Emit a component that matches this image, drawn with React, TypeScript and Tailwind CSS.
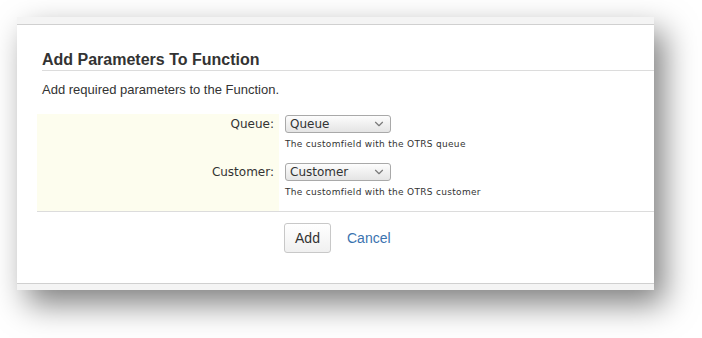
import { ChevronDown } from "lucide-react";

const sans = "font-['Liberation_Sans',Arial,sans-serif]";
const deja = "font-['DejaVu_Sans',sans-serif]";

function FakeSelect({ value }: { value: string }) {
    return (
        <div className={`flex items-center justify-between w-[106px] h-[18px] pl-[4px] pr-[4px] border border-[#a9a9a9] rounded-[3px] bg-gradient-to-b from-[#fdfdfd] to-[#e4e4e4] text-[12px] leading-none text-[#333] ${deja}`}>
            <span>{value}</span>
            <ChevronDown size={14} strokeWidth={2} className="text-[#7a7a7a]" />
        </div>
    );
}

function Row({ label, value, help, h }: { label: string; value: string; help: string; h: string }) {
    return (
        <div className={`flex ${h}`}>
            <div className={`w-[242px] bg-[#fdfdee] flex justify-end pr-[5px] pt-[3px] text-[12px] leading-[15px] text-[#333] ${deja}`}>
                {label}
            </div>
            <div className="pl-[6px] pt-[1px] flex flex-col">
                <FakeSelect value={value} />
                <p className={`mt-[6px] text-[9px] leading-[11px] tracking-[0.3px] text-[#333] ${deja}`}>{help}</p>
            </div>
        </div>
    );
}

export default function App() {
    return (
        <div className="w-[702px] h-[338px] bg-white overflow-hidden pt-[17px] pl-[17px]">
            <div className="w-[637px] bg-white shadow-[10px_14px_30px_rgba(0,0,0,0.5)]">
                <div className="h-[8px] bg-[#f4f4f4] border-b border-[#d0d0d0]" />
                <div className={`ml-[25px] pt-[24px] border-b border-[#dcdcdc] ${sans}`}>
                    <h1 className="text-[16px] leading-[21px] font-bold text-[#333]">Add Parameters To Function</h1>
                </div>
                <p className={`ml-[25px] mt-[11px] text-[13px] leading-[16px] text-[#333] ${sans}`}>
                    Add required parameters to the Function.
                </p>
                <div className="ml-[20px] mt-[16px]">
                    <Row label="Queue:" value="Queue" help="The customfield with the OTRS queue" h="h-[48px]" />
                    <Row label="Customer:" value="Customer" help="The customfield with the OTRS customer" h="h-[49px]" />
                    <div className="border-t border-[#dcdcdc] pl-[247px] pt-[11px] pb-[30px] flex items-center gap-[16px]">
                        <button className={`h-[30px] w-[47px] border border-[#c8c8c8] rounded-[3px] bg-gradient-to-b from-white to-[#f0f0f0] text-[14px] text-[#333] ${sans}`}>
                            Add
                        </button>
                        <a className={`text-[14px] text-[#3b73af] ${sans}`}>Cancel</a>
                    </div>
                </div>
                <div className="h-[7px] bg-[#f4f4f4] border-t border-[#d0d0d0]" />
            </div>
        </div>
    );
}
